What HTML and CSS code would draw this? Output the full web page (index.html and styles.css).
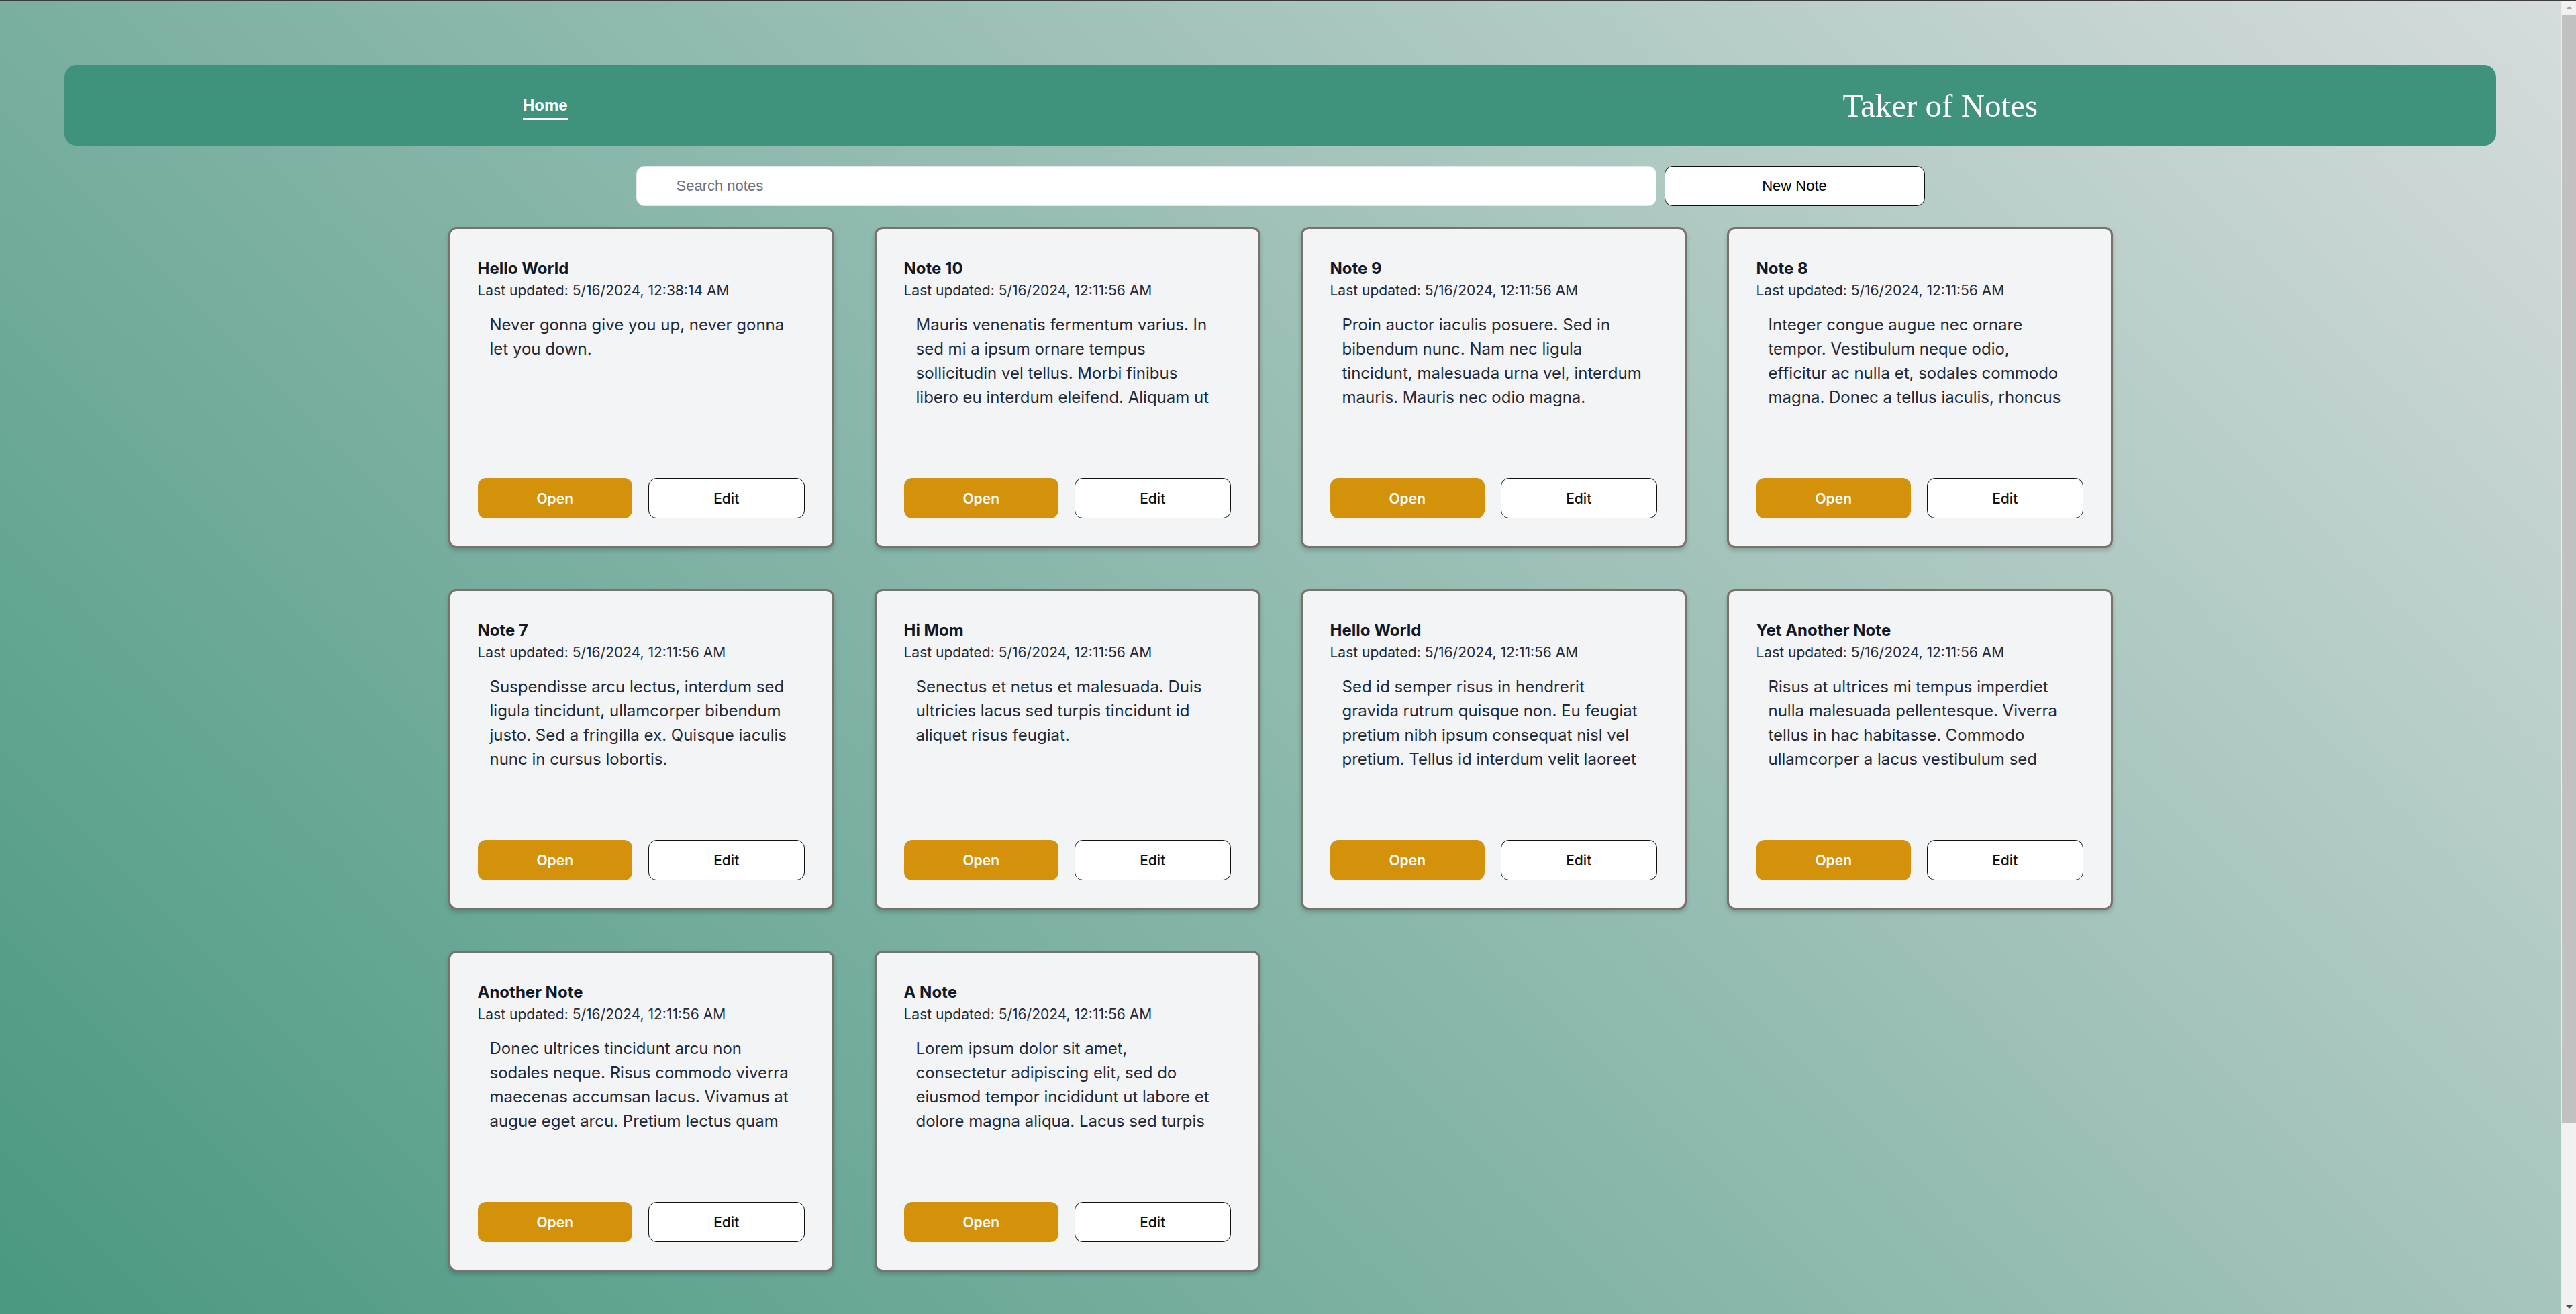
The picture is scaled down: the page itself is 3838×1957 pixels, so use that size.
FILE: index.html
```html
<!DOCTYPE html>
<html lang="en">
<head>
<meta charset="utf-8">
<title>Taker of Notes</title>
<link rel="stylesheet" href="styles.css">
</head>
<body>
<div class="chrome-line"></div>
<div class="scrollbar" aria-hidden="true">
  <div class="sb-btn"><span class="sb-arrow-up"></span></div>
  <div class="sb-thumb"></div>
  <div class="sb-track-rest"></div>
  <div class="sb-btn"><span class="sb-arrow-down"></span></div>
</div>
<header class="topbar">
  <nav class="topbar-inner">
    <a class="nav-link" href="#">Home</a>
    <h1 class="brand">Taker of Notes</h1>
  </nav>
</header>
<main class="main">
  <div class="toolbar">
    <input class="search" type="text" placeholder="Search notes">
    <button class="new-btn">New Note</button>
  </div>
  <div class="grid">
    <article class="card">
      <h2 class="card-title">Hello World</h2>
      <p class="card-date">Last updated: 5/16/2024, 12:38:14 AM</p>
      <p class="card-body">Never gonna give you up, never gonna let you down.</p>
      <div class="card-actions"><button class="btn btn-open">Open</button><button class="btn btn-edit">Edit</button></div>
    </article>
    <article class="card">
      <h2 class="card-title">Note 10</h2>
      <p class="card-date">Last updated: 5/16/2024, 12:11:56 AM</p>
      <p class="card-body">Mauris venenatis fermentum varius. In sed mi a ipsum ornare tempus sollicitudin vel tellus. Morbi finibus libero eu interdum eleifend. Aliquam ut tincidunt lectus, vitae posuere nulla.</p>
      <div class="card-actions"><button class="btn btn-open">Open</button><button class="btn btn-edit">Edit</button></div>
    </article>
    <article class="card">
      <h2 class="card-title">Note 9</h2>
      <p class="card-date">Last updated: 5/16/2024, 12:11:56 AM</p>
      <p class="card-body">Proin auctor iaculis posuere. Sed in bibendum nunc. Nam nec ligula tincidunt, malesuada urna vel, interdum mauris. Mauris nec odio magna.</p>
      <div class="card-actions"><button class="btn btn-open">Open</button><button class="btn btn-edit">Edit</button></div>
    </article>
    <article class="card">
      <h2 class="card-title">Note 8</h2>
      <p class="card-date">Last updated: 5/16/2024, 12:11:56 AM</p>
      <p class="card-body">Integer congue augue nec ornare tempor. Vestibulum neque odio, efficitur ac nulla et, sodales commodo magna. Donec a tellus iaculis, rhoncus lectus quis, consequat nulla.</p>
      <div class="card-actions"><button class="btn btn-open">Open</button><button class="btn btn-edit">Edit</button></div>
    </article>
    <article class="card">
      <h2 class="card-title">Note 7</h2>
      <p class="card-date">Last updated: 5/16/2024, 12:11:56 AM</p>
      <p class="card-body">Suspendisse arcu lectus, interdum sed ligula tincidunt, ullamcorper bibendum justo. Sed a fringilla ex. Quisque iaculis nunc in cursus lobortis.</p>
      <div class="card-actions"><button class="btn btn-open">Open</button><button class="btn btn-edit">Edit</button></div>
    </article>
    <article class="card">
      <h2 class="card-title">Hi Mom</h2>
      <p class="card-date">Last updated: 5/16/2024, 12:11:56 AM</p>
      <p class="card-body">Senectus et netus et malesuada. Duis ultricies lacus sed turpis tincidunt id aliquet risus feugiat.</p>
      <div class="card-actions"><button class="btn btn-open">Open</button><button class="btn btn-edit">Edit</button></div>
    </article>
    <article class="card">
      <h2 class="card-title">Hello World</h2>
      <p class="card-date">Last updated: 5/16/2024, 12:11:56 AM</p>
      <p class="card-body">Sed id semper risus in hendrerit gravida rutrum quisque non. Eu feugiat pretium nibh ipsum consequat nisl vel pretium. Tellus id interdum velit laoreet id donec ultrices tincidunt.</p>
      <div class="card-actions"><button class="btn btn-open">Open</button><button class="btn btn-edit">Edit</button></div>
    </article>
    <article class="card">
      <h2 class="card-title">Yet Another Note</h2>
      <p class="card-date">Last updated: 5/16/2024, 12:11:56 AM</p>
      <p class="card-body">Risus at ultrices mi tempus imperdiet nulla malesuada pellentesque. Viverra tellus in hac habitasse. Commodo ullamcorper a lacus vestibulum sed arcu non odio euismod.</p>
      <div class="card-actions"><button class="btn btn-open">Open</button><button class="btn btn-edit">Edit</button></div>
    </article>
    <article class="card">
      <h2 class="card-title">Another Note</h2>
      <p class="card-date">Last updated: 5/16/2024, 12:11:56 AM</p>
      <p class="card-body">Donec ultrices tincidunt arcu non sodales neque. Risus commodo viverra maecenas accumsan lacus. Vivamus at augue eget arcu. Pretium lectus quam id leo in vitae turpis.</p>
      <div class="card-actions"><button class="btn btn-open">Open</button><button class="btn btn-edit">Edit</button></div>
    </article>
    <article class="card">
      <h2 class="card-title">A Note</h2>
      <p class="card-date">Last updated: 5/16/2024, 12:11:56 AM</p>
      <p class="card-body">Lorem ipsum dolor sit amet, consectetur adipiscing elit, sed do eiusmod tempor incididunt ut labore et dolore magna aliqua. Lacus sed turpis tincidunt id aliquet risus feugiat in ante.</p>
      <div class="card-actions"><button class="btn btn-open">Open</button><button class="btn btn-edit">Edit</button></div>
    </article>
  </div>
</main>
</body>
</html>
```
FILE: styles.css
```css
html {
  min-height: 100%;
  background: linear-gradient(45deg, #4a9882 0%, #d6dcdc 100%) fixed;
}

body {
  margin: 0 23px 0 0;
  font-family: "Liberation Sans", Arial, sans-serif;
  color: #111;
}

.chrome-line {
  position: fixed;
  top: 0;
  left: 0;
  right: 0;
  height: 1px;
  background: #3b3b3b;
  z-index: 10;
}

/* imitation of the browser's vertical scrollbar */
.scrollbar {
  position: fixed;
  top: 0;
  right: 0;
  bottom: 0;
  width: 23px;
  background: #f1f1f1;
  border-left: 2px solid #e9efee;
  box-sizing: border-box;
  display: flex;
  flex-direction: column;
  z-index: 5;
}

.sb-btn {
  height: 22px;
  display: flex;
  align-items: center;
  justify-content: center;
  flex: none;
}

.sb-arrow-up {
  width: 0;
  height: 0;
  border-left: 5px solid transparent;
  border-right: 5px solid transparent;
  border-bottom: 5px solid #a3a3a3;
}

.sb-arrow-down {
  width: 0;
  height: 0;
  border-left: 5px solid transparent;
  border-right: 5px solid transparent;
  border-top: 5px solid #505050;
}

.sb-thumb {
  height: 1650px;
  background: #c1c1c1;
  flex: none;
}

.sb-track-rest {
  flex: 1;
}

.topbar {
  margin: 97px 96px 0;
  height: 120px;
  background: #3f937c;
  border-radius: 18px;
  display: flex;
  align-items: center;
}

.topbar-inner {
  width: 2257px;
  margin: 0 auto;
  display: flex;
  justify-content: space-between;
  align-items: center;
}

.nav-link {
  color: #fff;
  font-size: 24px;
  font-weight: 700;
  text-decoration: none;
  padding-bottom: 4px;
  border-bottom: 3px solid #fff;
  margin-top: 6px;
}

.brand {
  margin: 0;
  font-family: "Liberation Serif", "Times New Roman", serif;
  font-weight: 400;
  font-size: 49px;
  color: #fff;
}

.main {
  padding-top: 30px;
  padding-bottom: 376px;
}

.toolbar {
  width: 1920px;
  margin: 0 auto;
  display: flex;
  gap: 12px;
}

.search {
  flex: 1;
  box-sizing: border-box;
  height: 60px;
  border: 1.5px solid #e5e7eb;
  border-radius: 12px;
  background: #fff;
  padding: 0 0 0 59px;
  font-family: "Liberation Sans", Arial, sans-serif;
  font-size: 22px;
  color: #111;
  outline: none;
}

.search::placeholder {
  color: #6b7280;
}

.new-btn {
  width: 388px;
  height: 60px;
  box-sizing: border-box;
  background: #fff;
  border: 1.5px solid #111;
  border-radius: 12px;
  font-family: "Liberation Sans", Arial, sans-serif;
  font-size: 22px;
  color: #000;
  cursor: pointer;
}

.grid {
  width: 2480px;
  margin: 31px auto 0;
  display: grid;
  grid-template-columns: repeat(4, 575px);
  column-gap: 60px;
  row-gap: 61px;
}

.card {
  box-sizing: border-box;
  height: 478px;
  background: #f3f4f6;
  border: 3px solid #78716c;
  border-radius: 12px;
  box-shadow: 0 4px 6px rgba(0, 0, 0, 0.18);
  padding: 41px;
  display: flex;
  flex-direction: column;
  font-family: Inter, "Noto Sans", sans-serif;
}

.card-title {
  margin: 0;
  font-size: 24px;
  line-height: 36px;
  font-weight: 700;
  color: #111827;
}

.card-date {
  margin: 0;
  font-size: 21px;
  line-height: 30px;
  color: #1f2937;
}

.card-body {
  margin: 18px 0 0;
  padding: 0 18px;
  height: 144px;
  overflow: hidden;
  font-size: 24px;
  line-height: 36px;
  color: #1f2937;
}

.card-actions {
  margin-top: auto;
  display: flex;
  gap: 24px;
}

.btn {
  flex: 1;
  height: 60px;
  box-sizing: border-box;
  border-radius: 12px;
  font-family: Inter, "Noto Sans", sans-serif;
  font-size: 21px;
  cursor: pointer;
}

.btn-open {
  background: #d4910a;
  border: none;
  color: #fff;
  font-weight: 600;
}

.btn-edit {
  background: #fff;
  border: 1.5px solid #111;
  color: #111;
  font-weight: 500;
}
```
